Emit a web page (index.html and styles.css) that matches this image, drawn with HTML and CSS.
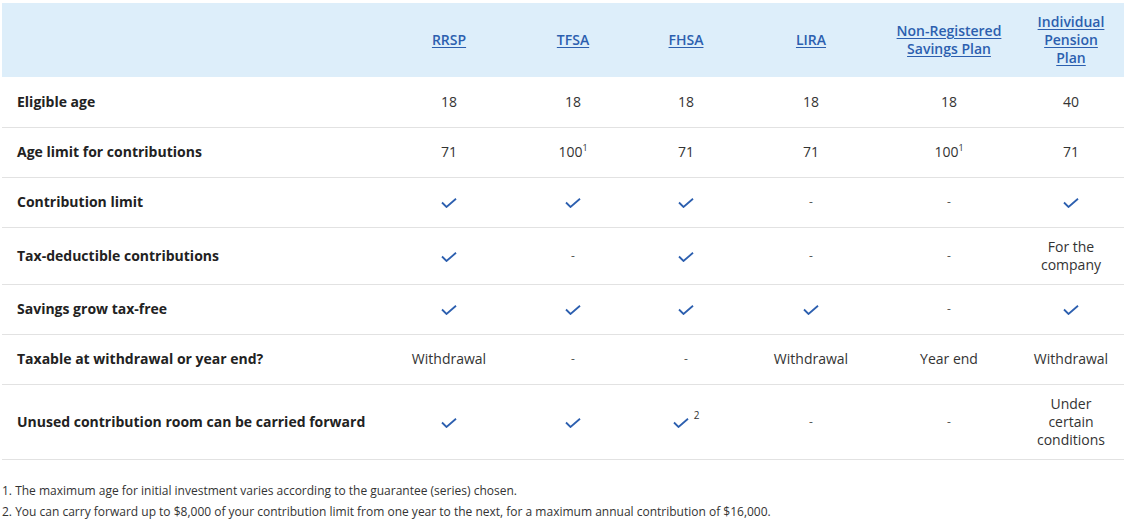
FILE: index.html
```html
<!DOCTYPE html>
<html lang="en">
<head>
<meta charset="utf-8">
<title>Comparison of savings plans</title>
<link rel="stylesheet" href="styles.css">
</head>
<body>
<div class="wrap">
  <table class="cmp">
    <colgroup>
      <col class="c-label">
      <col class="c-rrsp">
      <col class="c-tfsa">
      <col class="c-fhsa">
      <col class="c-lira">
      <col class="c-nreg">
      <col class="c-ipp">
    </colgroup>
    <thead>
      <tr>
        <th></th>
        <th><a href="#">RRSP</a></th>
        <th><a href="#">TFSA</a></th>
        <th><a href="#">FHSA</a></th>
        <th><a href="#">LIRA</a></th>
        <th><a href="#">Non-Registered Savings Plan</a></th>
        <th><a href="#">Individual Pension Plan</a></th>
      </tr>
    </thead>
    <tbody>
      <tr>
        <td class="lbl">Eligible age</td>
        <td>18</td><td>18</td><td>18</td><td>18</td><td>18</td><td>40</td>
      </tr>
      <tr>
        <td class="lbl">Age limit for contributions</td>
        <td>71</td><td>100<sup>1</sup></td><td>71</td><td>71</td><td>100<sup>1</sup></td><td>71</td>
      </tr>
      <tr>
        <td class="lbl">Contribution limit</td>
        <td><svg class="chk" viewBox="0 0 16 10"><polyline points="1,4.5 5.5,9 15,0.8"/></svg></td>
        <td><svg class="chk" viewBox="0 0 16 10"><polyline points="1,4.5 5.5,9 15,0.8"/></svg></td>
        <td><svg class="chk" viewBox="0 0 16 10"><polyline points="1,4.5 5.5,9 15,0.8"/></svg></td>
        <td class="dash">-</td>
        <td class="dash">-</td>
        <td><svg class="chk" viewBox="0 0 16 10"><polyline points="1,4.5 5.5,9 15,0.8"/></svg></td>
      </tr>
      <tr>
        <td class="lbl">Tax-deductible contributions</td>
        <td><svg class="chk" viewBox="0 0 16 10"><polyline points="1,4.5 5.5,9 15,0.8"/></svg></td>
        <td class="dash">-</td>
        <td><svg class="chk" viewBox="0 0 16 10"><polyline points="1,4.5 5.5,9 15,0.8"/></svg></td>
        <td class="dash">-</td>
        <td class="dash">-</td>
        <td>For the company</td>
      </tr>
      <tr>
        <td class="lbl">Savings grow tax-free</td>
        <td><svg class="chk" viewBox="0 0 16 10"><polyline points="1,4.5 5.5,9 15,0.8"/></svg></td>
        <td><svg class="chk" viewBox="0 0 16 10"><polyline points="1,4.5 5.5,9 15,0.8"/></svg></td>
        <td><svg class="chk" viewBox="0 0 16 10"><polyline points="1,4.5 5.5,9 15,0.8"/></svg></td>
        <td><svg class="chk" viewBox="0 0 16 10"><polyline points="1,4.5 5.5,9 15,0.8"/></svg></td>
        <td class="dash">-</td>
        <td><svg class="chk" viewBox="0 0 16 10"><polyline points="1,4.5 5.5,9 15,0.8"/></svg></td>
      </tr>
      <tr>
        <td class="lbl">Taxable at withdrawal or year end?</td>
        <td>Withdrawal</td>
        <td class="dash">-</td>
        <td class="dash">-</td>
        <td>Withdrawal</td>
        <td>Year end</td>
        <td>Withdrawal</td>
      </tr>
      <tr>
        <td class="lbl">Unused contribution room can be carried forward</td>
        <td><svg class="chk" viewBox="0 0 16 10"><polyline points="1,4.5 5.5,9 15,0.8"/></svg></td>
        <td><svg class="chk" viewBox="0 0 16 10"><polyline points="1,4.5 5.5,9 15,0.8"/></svg></td>
        <td><svg class="chk" viewBox="0 0 16 10"><polyline points="1,4.5 5.5,9 15,0.8"/></svg><sup class="sup-gap">2</sup></td>
        <td class="dash">-</td>
        <td class="dash">-</td>
        <td>Under certain conditions</td>
      </tr>
    </tbody>
  </table>
  <ol class="notes">
    <li>1. The maximum age for initial investment varies according to the guarantee (series) chosen.</li>
    <li>2. You can carry forward up to $8,000 of your contribution limit from one year to the next, for a maximum annual contribution of $16,000.</li>
  </ol>
</div>
</body>
</html>
```

FILE: styles.css
```css
html, body {
  margin: 0;
  padding: 0;
  background: #fff;
}
body {
  font-family: "Open Sans", "Liberation Sans", sans-serif;
  color: #333;
  font-size: 14px;
  line-height: 18px;
}
.wrap {
  padding: 3px 3px 0 2px;
}
.cmp {
  border-collapse: collapse;
  table-layout: fixed;
  width: 1122px;
}
.c-label { width: 380px; }
.c-rrsp { width: 134px; }
.c-tfsa { width: 114px; }
.c-fhsa { width: 112px; }
.c-lira { width: 138px; }
.c-nreg { width: 138px; }
.c-ipp { width: 106px; }

.cmp thead th {
  background: #ddeefa;
  height: 74px;
  padding: 0 12px;
  text-align: center;
  vertical-align: middle;
  font-weight: 600;
}
.cmp thead a {
  color: #2c5faf;
  text-decoration: underline;
  text-underline-offset: 2px;
}
.cmp tbody td {
  height: 50px;
  padding: 10px 10px;
  border-bottom: 1px solid #e2e2e2;
  text-align: center;
  vertical-align: middle;
  box-sizing: border-box;
}
.cmp tbody td.lbl {
  text-align: left;
  padding-left: 15px;
  font-weight: 700;
  color: #222;
}
.cmp td.dash {
  color: #555;
  font-size: 12px;
}
.chk {
  width: 16px;
  height: 10px;
  display: inline-block;
  vertical-align: middle;
}
.chk polyline {
  fill: none;
  stroke: #2c5faf;
  stroke-width: 1.8;
  stroke-linecap: butt;
  stroke-linejoin: miter;
}
sup {
  font-size: 9px;
  line-height: 0;
  vertical-align: 6px;
}
.sup-gap {
  margin-left: 5px;
  font-size: 10px;
  vertical-align: 8px;
}
.notes {
  list-style: none;
  margin: 20px 0 0 0;
  padding: 0;
  font-size: 12px;
  line-height: 21px;
  color: #333;
}
```
